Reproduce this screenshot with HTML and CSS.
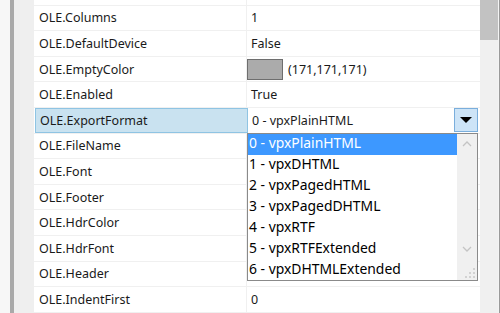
FILE: index.html
```html
<!DOCTYPE html>
<html>
<head>
	<meta charset="utf-8">
	<title>属性</title>
	<link rel="stylesheet" href="styles.css">
</head>
<body>
<div class="frame">
	<div class="rim"></div>
	<div class="stripe"></div>
	<div class="gutter"></div>
	<div class="grid">
		<div class="row"><div class="name"></div><div class="val"></div></div>
		<div class="row"><div class="name">OLE.Columns</div><div class="val">1</div></div>
		<div class="row"><div class="name">OLE.DefaultDevice</div><div class="val">False</div></div>
		<div class="row"><div class="name">OLE.EmptyColor</div><div class="val"><span class="swatch"></span>(171,171,171)</div></div>
		<div class="row"><div class="name">OLE.Enabled</div><div class="val">True</div></div>
		<div class="row sel">
			<div class="name">OLE.ExportFormat</div>
			<div class="val">
				<span>0 - vpxPlainHTML</span>
				<span class="drop"><i class="tri"></i></span>
				<div class="list">
					<ul>
						<li class="on">0 - vpxPlainHTML</li>
						<li>1 - vpxDHTML</li>
						<li>2 - vpxPagedHTML</li>
						<li>3 - vpxPagedDHTML</li>
						<li>4 - vpxRTF</li>
						<li>5 - vpxRTFExtended</li>
						<li>6 - vpxDHTMLExtended</li>
					</ul>
					<div class="lbar">
						<svg width="20" height="20" viewBox="0 0 20 20"><path d="M6 12 L10 8 L14 12" fill="none" stroke="#c4c4c4" stroke-width="1.3"/></svg>
						<svg width="20" height="20" viewBox="0 0 20 20"><path d="M6 8 L10 12 L14 8" fill="none" stroke="#c4c4c4" stroke-width="1.3"/></svg>
						<svg class="grip" width="12" height="12" viewBox="0 0 12 12" fill="#d2d2d2">
							<rect x="9" y="1" width="2" height="2"/>
							<rect x="5" y="5" width="2" height="2"/><rect x="9" y="5" width="2" height="2"/>
							<rect x="1" y="9" width="2" height="2"/><rect x="5" y="9" width="2" height="2"/><rect x="9" y="9" width="2" height="2"/>
						</svg>
					</div>
				</div>
			</div>
		</div>
		<div class="row"><div class="name">OLE.FileName</div><div class="val"></div></div>
		<div class="row"><div class="name">OLE.Font</div><div class="val"></div></div>
		<div class="row"><div class="name">OLE.Footer</div><div class="val"></div></div>
		<div class="row"><div class="name">OLE.HdrColor</div><div class="val"></div></div>
		<div class="row"><div class="name">OLE.HdrFont</div><div class="val"></div></div>
		<div class="row"><div class="name">OLE.Header</div><div class="val"></div></div>
		<div class="row"><div class="name">OLE.IndentFirst</div><div class="val">0</div></div>
		<div class="row"><div class="name"></div><div class="val"></div></div>
	</div>
	<div class="vscroll"><div class="thumb"></div></div>
	<div class="edge"></div>
</div>
</body>
</html>
```

FILE: styles.css
```css
html, body{
	margin: 0;
	padding: 0;
}
body{
	width: 500px;
	height: 313px;
	overflow: hidden;
	font-family: "Noto Sans", "Open Sans", sans-serif;
	font-size: 12.5px;
	color: #1a1a1a;
}
.frame{
	display: flex;
	height: 313px;
}
.rim{
	width: 10px;
	background: #f7f7f7;
}
.stripe{
	width: 4px;
	background: #a9a9a9;
}
.gutter{
	width: 20px;
	background: #efefef;
}
.grid{
	width: 446px;
	background: #fff;
	overflow: hidden;
}
.row{
	display: flex;
	height: 25.6px;
	box-sizing: border-box;
	border-bottom: 1px solid #f0f0f0;
}
.row:first-child{
	margin-top: -20px;
}
.name{
	width: 213px;
	box-sizing: border-box;
	padding-left: 5px;
	border-right: 1px solid #f0f0f0;
	display: flex;
	align-items: center;
}
.val{
	flex: 1;
	padding-left: 4px;
	display: flex;
	align-items: center;
	position: relative;
}
.swatch{
	width: 36px;
	height: 21px;
	box-sizing: border-box;
	background: #ababab;
	border: 1px solid #6e6e6e;
	margin-left: -4px;
	margin-right: 5px;
}
.sel .name{
	background: #c9e2f0;
	border: 1px solid #8fc4e3;
	padding-left: 4px;
	margin-left: 1px;
	width: 213px;
}
.drop{
	position: absolute;
	right: 2px;
	top: 0;
	width: 24px;
	height: 24px;
	box-sizing: border-box;
	background: #cde4f7;
	border: 1px solid #7aaedc;
	display: flex;
	align-items: center;
	justify-content: center;
}
.tri{
	width: 0;
	height: 0;
	border-left: 6px solid transparent;
	border-right: 6px solid transparent;
	border-top: 6px solid #000;
}
.list{
	position: absolute;
	left: -1px;
	top: 24.6px;
	width: 231px;
	height: 148px;
	box-sizing: border-box;
	border: 1px solid #8a8a8a;
	background: #fff;
	display: flex;
	z-index: 2;
}
.list ul{
	flex: 1;
	margin: 0;
	padding: 0;
	list-style: none;
	font-size: 13.9px;
	color: #000;
}
.list li{
	height: 21px;
	line-height: 18px;
	box-sizing: border-box;
	padding-left: 1px;
}
.list .on{
	background: #3d98ff;
	color: #fff;
}
.lbar{
	width: 20px;
	background: #f0f0f0;
	position: relative;
	display: flex;
	flex-direction: column;
	justify-content: space-between;
	padding: 0 0 21px;
}
.grip{
	position: absolute;
	right: 1px;
	bottom: 1px;
}
.vscroll{
	width: 18px;
	background: #f0f0f0;
}
.thumb{
	height: 40px;
	background: #c2c2c2;
}
.edge{
	width: 2px;
	background: #f4f4f4;
	border-right: 1px solid #9a9a9a;
	box-sizing: border-box;
}
```
